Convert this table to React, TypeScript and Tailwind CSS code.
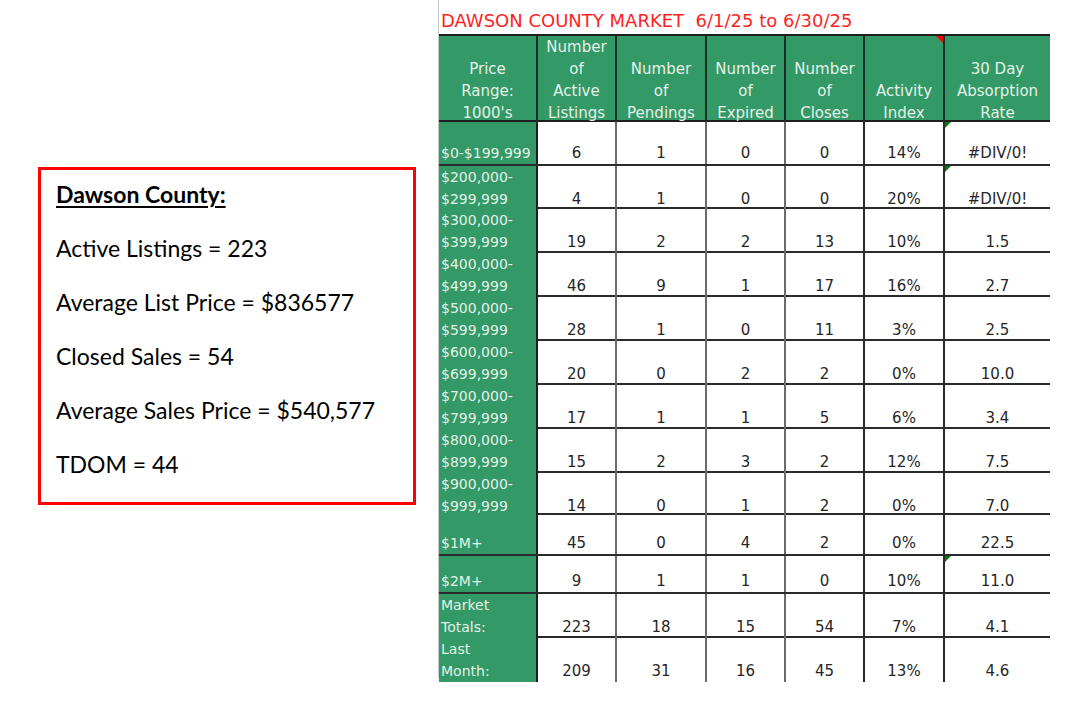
const ROWS: { label: string[]; vals: string[]; h: string; flag?: boolean }[] = [
  { label: ["$0-$199,999"], vals: ["6", "1", "0", "0", "14%", "#DIV/0!"], h: "h-[44px]", flag: true },
  { label: ["$200,000-", "$299,999"], vals: ["4", "1", "0", "0", "20%", "#DIV/0!"], h: "h-[43px]", flag: true },
  { label: ["$300,000-", "$399,999"], vals: ["19", "2", "2", "13", "10%", "1.5"], h: "h-[44px]" },
  { label: ["$400,000-", "$499,999"], vals: ["46", "9", "1", "17", "16%", "2.7"], h: "h-[44px]" },
  { label: ["$500,000-", "$599,999"], vals: ["28", "1", "0", "11", "3%", "2.5"], h: "h-[44px]" },
  { label: ["$600,000-", "$699,999"], vals: ["20", "0", "2", "2", "0%", "10.0"], h: "h-[44px]" },
  { label: ["$700,000-", "$799,999"], vals: ["17", "1", "1", "5", "6%", "3.4"], h: "h-[44px]" },
  { label: ["$800,000-", "$899,999"], vals: ["15", "2", "3", "2", "12%", "7.5"], h: "h-[44px]" },
  { label: ["$900,000-", "$999,999"], vals: ["14", "0", "1", "2", "0%", "7.0"], h: "h-[42px]" },
  { label: ["$1M+"], vals: ["45", "0", "4", "2", "0%", "22.5"], h: "h-[41px]" },
  { label: ["$2M+"], vals: ["9", "1", "1", "0", "10%", "11.0"], h: "h-[38px]", flag: true },
  { label: ["Market", "Totals:"], vals: ["223", "18", "15", "54", "7%", "4.1"], h: "h-[44px]" },
  { label: ["Last", "Month:"], vals: ["209", "31", "16", "45", "13%", "4.6"], h: "h-[40px]" },
]

const HEADERS = [
  ["Price", "Range:", "1000's"],
  ["Number", "of", "Active", "Listings"],
  ["Number", "of", "Pendings"],
  ["Number", "of", "Expired"],
  ["Number", "of", "Closes"],
  ["Activity", "Index"],
  ["30 Day", "Absorption", "Rate"],
]

const COLS = "grid grid-cols-[99px_79px_90px_79px_79px_80px_105px]"

function GreenFlag() {
  return (
    <span className="absolute left-0 top-0 h-0 w-0 border-t-[6px] border-r-[6px] border-t-[#0a7a0a] border-r-transparent" />
  )
}

export default function App() {
  return (
    <div className="flex h-[712px] w-[1067px] items-start bg-white">
      {/* summary box */}
      <div className="ml-[38px] mt-[167px] h-[338px] w-[378px] border-[3px] border-[#ff0000] pl-[15px] pt-[9px] font-['Lato','Liberation_Sans',sans-serif] text-[23px] text-black">
        <div className="flex flex-col gap-[24px] leading-[30px]">
          <p className="font-bold underline underline-offset-[3px]">Dawson County:</p>
          <p>Active Listings = 223</p>
          <p>Average List Price = $836577</p>
          <p>Closed Sales = 54</p>
          <p>Average Sales Price = $540,577</p>
          <p>TDOM = 44</p>
        </div>
      </div>

      {/* market table */}
      <div className="ml-[22px] w-[612px] border-l border-[#c8c8c8] font-['DejaVu_Sans',sans-serif]">
        <div className="flex h-[34px] items-end pb-[1px] pl-[2px] text-[18px] leading-[24px] whitespace-pre text-[#ff1f1f]">
          {"DAWSON COUNTY MARKET  6/1/25 to 6/30/25"}
        </div>

        <div className={`${COLS} h-[88px] border-y-2 border-[#1e1e1e] bg-[#339966] text-[15px] leading-[22px] text-[#e4f1e8]`}>
          {HEADERS.map((lines, i) => (
            <div
              key={i}
              className={`relative flex flex-col items-center justify-end text-center ${i < 6 ? "border-r-2 border-[#1a2e22]" : ""}`}
            >
              {lines.map((l) => (
                <span key={l}>{l}</span>
              ))}
              {i === 5 && (
                <span className="absolute right-0 top-0 h-0 w-0 border-t-[7px] border-l-[7px] border-t-[#ff0000] border-l-transparent" />
              )}
            </div>
          ))}
        </div>

        {ROWS.map((row, r) => (
          <div
            key={r}
            className={`${COLS} ${row.h} ${r < ROWS.length - 1 ? "border-b-2 border-[#2a2a2a]" : ""} leading-[22px]`}
          >
            <div className="flex flex-col justify-end border-r-2 border-[#1e1e1e] bg-[#339966] pl-[2px] text-[14px] text-[#e4f1e8]">
              {row.label.map((l) => (
                <span key={l} className="whitespace-nowrap">
                  {l}
                </span>
              ))}
            </div>
            {row.vals.map((v, c) => (
              <div
                key={c}
                className={`relative flex items-end justify-center text-[15px] text-[#262626] ${c < 5 ? (c < 3 ? "border-r-2 border-[#6b6b6b]" : "border-r-2 border-[#2a2a2a]") : ""}`}
              >
                {c === 5 && row.flag && <GreenFlag />}
                {v}
              </div>
            ))}
          </div>
        ))}
      </div>
    </div>
  )
}
